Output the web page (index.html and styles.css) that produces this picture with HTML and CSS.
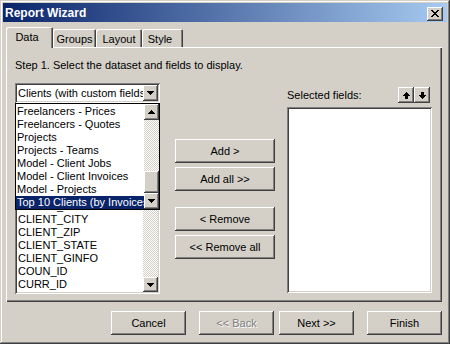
FILE: index.html
```html
<!DOCTYPE html>
<html lang="en">
<head>
    <meta charset="UTF-8">
    <title>Report Wizard</title>
    <link rel="stylesheet" href="styles.css">
</head>
<body>
    <div class="window">
        <div class="titlebar">
            <span class="title">Report Wizard</span>
            <button class="btn close">
                <svg width="8" height="7" viewBox="0 0 8 7"><path d="M0 0h2v1h-2zM6 0h2v1h-2zM1 1h2v1h-2zM5 1h2v1h-2zM2 2h4v1h-4zM3 3h2v1h-2zM2 4h4v1h-4zM1 5h2v1h-2zM5 5h2v1h-2zM0 6h2v1h-2zM6 6h2v1h-2z"/></svg>
            </button>
        </div>

        <div class="tabstrip">
            <div class="tab active">Data</div>
            <div class="tab tab-groups">Groups</div>
            <div class="tab tab-layout">Layout</div>
            <div class="tab tab-style">Style</div>
        </div>

        <div class="panel">
            <p class="step">Step 1. Select the dataset and fields to display.</p>

            <div class="fields">
                <div class="col-source">
                    <div class="combo sunken">
                        <span class="combo-text">Clients (with custom fields)</span>
                        <span class="btn sb-btn"><svg width="7" height="4" viewBox="0 0 7 4"><path d="M0 0h7v1h-1v1h-1v1h-1v1h-1v-1h-1v-1h-1v-1h-1z"/></svg></span>
                    </div>

                    <div class="listbox sunken source-list">
                        <!-- the first rows sit behind the open dropdown -->
                        <ul class="items">
                            <li>CLIENT_ADDRESS</li>
                            <li>CLIENT_CITY</li>
                            <li>CLIENT_ZIP</li>
                            <li>CLIENT_STATE</li>
                            <li>CLIENT_GINFO</li>
                            <li>COUN_ID</li>
                            <li>CURR_ID</li>
                        </ul>
                        <div class="scrollbar">
                            <div class="track"></div>
                            <span class="btn sb-btn"><svg width="7" height="4" viewBox="0 0 7 4"><path d="M0 0h7v1h-1v1h-1v1h-1v1h-1v-1h-1v-1h-1v-1h-1z"/></svg></span>
                        </div>
                    </div>

                    <!-- open dropdown of the dataset combo -->
                    <div class="dropdown">
                        <ul class="items">
                            <li>Freelancers - Prices</li>
                            <li>Freelancers - Quotes</li>
                            <li>Projects</li>
                            <li>Projects - Teams</li>
                            <li>Model - Client Jobs</li>
                            <li>Model - Client Invoices</li>
                            <li>Model - Projects</li>
                            <li class="selected">Top 10 Clients (by Invoices)</li>
                        </ul>
                        <div class="scrollbar">
                            <span class="btn sb-btn"><svg width="7" height="4" viewBox="0 0 7 4"><path d="M3 0h1v1h1v1h1v1h1v1h-7v-1h1v-1h1v-1h1z"/></svg></span>
                            <div class="track">
                                <span class="btn thumb"></span>
                            </div>
                            <span class="btn sb-btn"><svg width="7" height="4" viewBox="0 0 7 4"><path d="M0 0h7v1h-1v1h-1v1h-1v1h-1v-1h-1v-1h-1v-1h-1z"/></svg></span>
                        </div>
                    </div>
                </div>

                <div class="col-actions">
                    <button class="btn action">Add &gt;</button>
                    <button class="btn action">Add all &gt;&gt;</button>
                    <button class="btn action spaced">&lt; Remove</button>
                    <button class="btn action">&lt;&lt; Remove all</button>
                </div>

                <div class="col-target">
                    <div class="target-head">
                        <span>Selected fields:</span>
                        <div class="order-btns">
                            <button class="btn order"><svg width="7" height="7" viewBox="0 0 7 7"><path d="M3 0h1v1h1v1h1v1h1v1h-7v-1h1v-1h1v-1h1zM2 4h3v3h-3z"/></svg></button>
                            <button class="btn order"><svg width="7" height="7" viewBox="0 0 7 7"><path d="M2 0h3v3h-3zM0 3h7v1h-1v1h-1v1h-1v1h-1v-1h-1v-1h-1v-1h-1z"/></svg></button>
                        </div>
                    </div>
                    <div class="listbox sunken target-list"></div>
                </div>
            </div>
        </div>

        <div class="footer">
            <button class="btn wide">Cancel</button>
            <button class="btn wide disabled">&lt;&lt; Back</button>
            <button class="btn wide next">Next &gt;&gt;</button>
            <button class="btn wide finish">Finish</button>
        </div>
    </div>
</body>
</html>
```

FILE: styles.css
```css
body {
    margin: 0;
    font: 11px "Liberation Sans", Arial, sans-serif;
    color: #000;
    background: #fff;
}
ul {
    list-style: none;
    margin: 0;
    padding: 0;
}
.window {
    box-sizing: border-box;
    width: 450px;
    height: 344px;
    padding: 3px;
    display: flex;
    flex-direction: column;
    background: #d4d0c8;
    box-shadow: inset -1px -1px #404040, inset 1px 1px #d4d0c8, inset -2px -2px #808080, inset 2px 2px #fff;
}
.btn {
    box-sizing: border-box;
    border: 0;
    padding: 0;
    font: inherit;
    color: #000;
    background: #d4d0c8;
    display: flex;
    align-items: center;
    justify-content: center;
    box-shadow: inset -1px -1px #404040, inset 1px 1px #fff, inset -2px -2px #808080, inset 2px 2px #d4d0c8;
}
.sunken {
    box-sizing: border-box;
    padding: 2px;
    background: #fff;
    box-shadow: inset 1px 1px #808080, inset -1px -1px #fff, inset 2px 2px #404040, inset -2px -2px #d4d0c8;
}

/* title bar */
.titlebar {
    height: 19px;
    display: flex;
    align-items: center;
    justify-content: space-between;
    padding-left: 2px;
    background: linear-gradient(to right, #0a246a, #a6caf0);
}
.title {
    color: #fff;
    font-size: 12px;
    font-weight: bold;
}
.close {
    width: 16px;
    height: 14px;
    margin: 2px 4px 0 0;
}

/* tabs */
.tabstrip {
    display: flex;
    align-items: flex-end;
    height: 20px;
    margin: 5px 0 0 3px;
    position: relative;
    z-index: 1;
}
.tab {
    box-sizing: border-box;
    height: 18px;
    line-height: 20px;
    text-align: center;
    border-radius: 2px 2px 0 0;
    box-shadow: inset 1px 1px #fff, inset -1px 0 #404040, inset -2px 0 #808080;
}
.tab.active {
    width: 47px;
    height: 21px;
    margin-bottom: -1px;
    padding: 0 5px 3px 0;
    line-height: 20px;
    background: #d4d0c8;
}
.tab-groups { width: 43px; }
.tab-layout { width: 46px; }
.tab-style { width: 41px; padding-right: 5px; }

.panel {
    box-sizing: border-box;
    height: 255px;
    margin: 0 5px 0 3px;
    padding: 12px 10px 0 9px;
    box-shadow: inset 1px 1px #fff, inset -1px -1px #404040, inset -2px -2px #808080;
}
.step {
    margin: 0;
    line-height: 13px;
}
.fields {
    display: flex;
    margin-top: 11px;
}

/* dataset + field list */
.col-source {
    width: 145px;
    position: relative;
}
.combo {
    height: 20px;
    display: flex;
}
.combo-text {
    flex: 1;
    overflow: hidden;
    white-space: nowrap;
    line-height: 16px;
    padding-left: 1px;
}
.sb-btn {
    width: 15px;
    height: 16px;
    flex: none;
}
.listbox {
    display: flex;
    overflow: hidden;
}
.source-list {
    height: 187px;
    margin-top: 4px;
}
.source-list .items {
    padding-top: 91px;
}
.items {
    flex: 1;
    min-width: 0;
    padding-left: 1px;
}
.items li {
    line-height: 13px;
    white-space: nowrap;
    overflow: hidden;
}
.scrollbar {
    width: 15px;
    display: flex;
    flex-direction: column;
}
.scrollbar .sb-btn {
    height: 15px;
}
.track {
    flex: 1;
    display: flex;
    flex-direction: column;
    justify-content: flex-end;
    background-image: conic-gradient(#fff 25%, #d4d0c8 0 50%, #fff 0 75%, #d4d0c8 0);
    background-size: 2px 2px;
}
.thumb {
    height: 22px;
}
.dropdown {
    position: absolute;
    top: 20px;
    left: 0;
    box-sizing: border-box;
    width: 145px;
    height: 107px;
    display: flex;
    border: 1px solid #000;
    background: #fff;
}
.dropdown .items {
    padding: 1px 0 0 1px;
}
.dropdown .scrollbar .sb-btn {
    height: 16px;
}
.items li.selected {
    margin-left: -1px;
    padding-left: 1px;
    color: #fff;
    background: #0a246a;
}

/* add / remove buttons */
.col-actions {
    width: 100px;
    margin-left: 15px;
    padding-top: 56px;
    display: flex;
    flex-direction: column;
}
.action {
    height: 24px;
    margin-bottom: 4px;
}
.action.spaced {
    margin-top: 12px;
}

/* selected fields */
.col-target {
    width: 145px;
    margin-left: 12px;
}
.target-head {
    height: 24px;
    display: flex;
    align-items: center;
    justify-content: space-between;
    padding-right: 2px;
}
.order-btns {
    display: flex;
}
.order {
    width: 16px;
    height: 16px;
}
.target-list {
    height: 186px;
}

/* wizard buttons */
.footer {
    display: flex;
    justify-content: flex-end;
    margin: 9px 5px 0 0;
}
.wide {
    width: 75px;
    height: 24px;
    margin-left: 13px;
}
.wide.next {
    margin-left: 5px;
}
.disabled {
    color: #808080;
    text-shadow: 1px 1px #fff;
}
```
